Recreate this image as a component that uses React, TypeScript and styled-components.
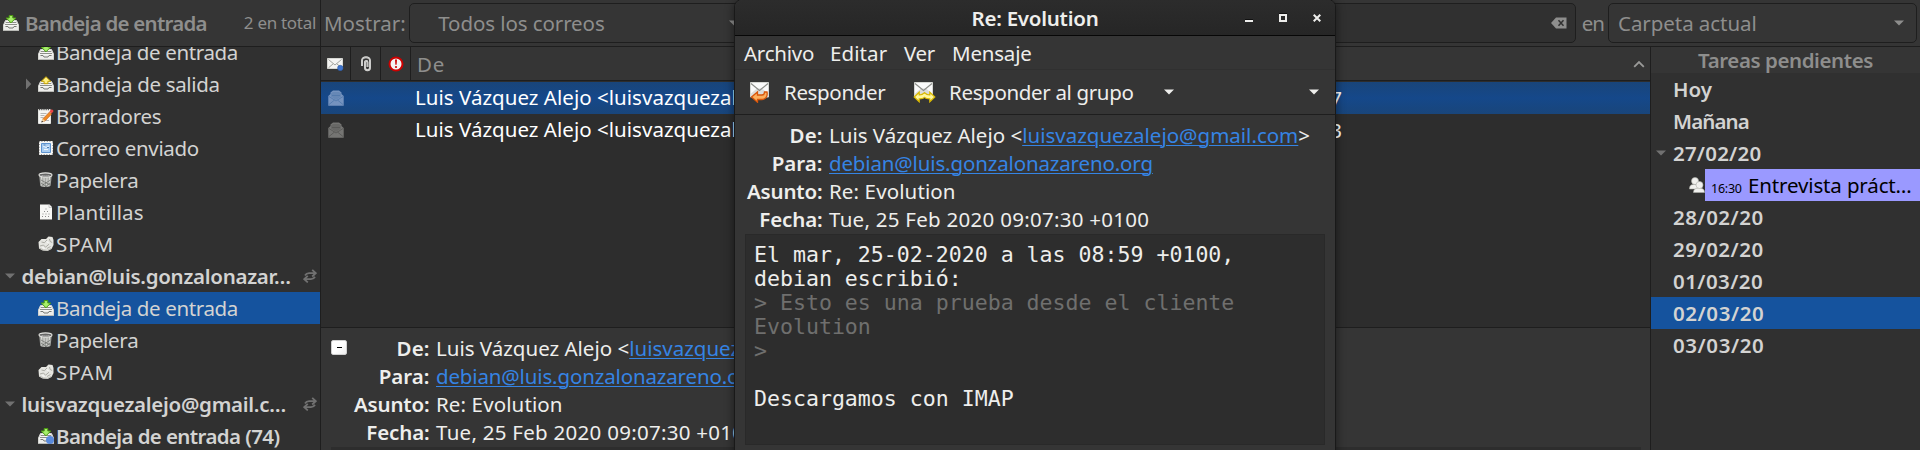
import React from 'react';
import styled, { createGlobalStyle, css } from 'styled-components';

const line = '#1e1e1e';

const Global = createGlobalStyle`
  * { box-sizing: border-box; }
  body {
    margin: 0;
    background: #353535;
    font-family: "Noto Sans", "Open Sans", sans-serif;
    font-size: 20.5px;
    line-height: 32px;
    white-space: nowrap;
  }
  svg { display: block; flex: none; }
`;

const Text = styled.span<{ $ls?: number; $bold?: boolean }>`
  letter-spacing: ${(p) => p.$ls ?? 0}px;
  font-weight: ${(p) => (p.$bold ? 600 : 400)};
`;

const Screen = styled.div`
  position: relative;
  width: 1920px;
  height: 450px;
  overflow: hidden;
  display: grid;
  grid-template-columns: 321px 1fr;
  grid-template-rows: 47px 403px;
  background: #353535;
`;

const FolderHeader = styled.header`
  display: flex;
  align-items: center;
  padding: 0 4px 0 3px;
  border-right: 1px solid ${line};
  border-bottom: 1px solid ${line};
  color: #8e8e8d;
`;
const FolderTitle = styled(Text)`
  margin-left: 6px;
  flex: 1;
`;
const Total = styled(Text)`
  font-size: 17px;
`;

const SearchBar = styled.header`
  display: flex;
  align-items: center;
  padding: 0 3px 0 3px;
  border-bottom: 1px solid ${line};
  color: #8e8e8d;
`;
const Combo = styled.div<{ $width: number; $indent: number; $gap: number }>`
  display: flex;
  align-items: center;
  justify-content: space-between;
  width: ${(p) => p.$width}px;
  height: 40px;
  margin-left: ${(p) => p.$gap}px;
  padding: 0 12px 0 ${(p) => p.$indent}px;
  border: 1px solid ${line};
  border-radius: 5px;
`;
const SearchEntry = styled.div`
  display: flex;
  flex: 1;
  align-items: center;
  justify-content: flex-end;
  height: 40px;
  margin: 0 6px 0 30px;
  padding-right: 8px;
  background: #303030;
  border: 1px solid ${line};
  border-radius: 5px;
`;

const Sidebar = styled.nav`
  overflow: hidden;
  background: #303030;
  border-right: 1px solid ${line};
  color: #d3d3d2;
`;
const FolderList = styled.div`
  margin-top: -11px;
`;
const FolderRow = styled.div<{ $selected?: boolean }>`
  display: flex;
  align-items: center;
  height: 32px;
  padding-left: 26px;
  ${(p) => p.$selected && css`background: #15539e;`}
`;
const Expander = styled.span`
  width: 12px;
`;
const FolderName = styled(Text)`
  margin-left: 2px;
`;
const AccountRow = styled.div`
  display: flex;
  align-items: center;
  height: 32px;
  padding: 0 3px 0 5px;
`;
const AccountName = styled(Text)`
  flex: 1;
  margin-left: 6.5px;
`;

const Main = styled.main`
  display: grid;
  grid-template-columns: 1330px 1fr;
`;
const MailColumn = styled.section`
  display: flex;
  flex-direction: column;
  min-width: 0;
  border-right: 1px solid ${line};
`;
const ListHeader = styled.div`
  display: flex;
  flex: none;
  height: 34px;
  border-bottom: 1px solid ${line};
  color: #8e8e8d;
`;
const IconCell = styled.div`
  display: flex;
  align-items: center;
  justify-content: center;
  width: 30px;
  border-right: 1px solid ${line};
`;
const SenderCell = styled.div`
  display: flex;
  flex: 1;
  align-items: center;
  justify-content: space-between;
  padding: 0 5px 0 6px;
`;
const MessageList = styled.div`
  flex: none;
  height: 247px;
  padding-top: 1px;
  background: #2d2d2d;
  border-bottom: 1px solid ${line};
  color: #ffffff;
`;
const MessageRow = styled.div<{ $selected?: boolean }>`
  display: flex;
  align-items: center;
  height: 32px;
  padding-left: 7px;
  line-height: 30px;
  ${(p) => p.$selected && css`
    background: linear-gradient(#19457a, #15488a 50%, #19457a);
  `}
`;
const Sender = styled(Text)`
  width: 540px;
  margin-left: 71px;
  height: 32px;
  overflow: hidden;
`;
const When = styled(Text)`
  width: 387px;
  text-align: right;
`;

const Preview = styled.div<{ $indent: number }>`
  display: flex;
  flex: 1;
  align-items: flex-start;
  padding: 6px 0 0 ${(p) => p.$indent}px;
  color: #eeeeec;
`;
const PreviewBody = styled.div`
  flex: none;
  height: 3px;
  margin: 0 9px 0 10px;
  background: #2d2d2d;
`;
const CollapseButton = styled.div`
  display: flex;
  align-items: center;
  justify-content: center;
  width: 16px;
  height: 15px;
  margin-top: 6px;
  border: 1px solid #d0d0d0;
  border-radius: 2px;
  background: linear-gradient(135deg, #fff 50%, #ededed);
`;
const Dash = styled.i`
  width: 5px;
  height: 1px;
  background: #000;
`;
const Fields = styled.div<{ $label: number }>`
  display: grid;
  grid-template-columns: ${(p) => p.$label}px auto;
  column-gap: 6.5px;
  line-height: 28px;
`;
const FieldName = styled(Text)`
  text-align: right;
`;
const Link = styled.a<{ $ls: number }>`
  letter-spacing: ${(p) => p.$ls}px;
  color: #3584e4;
  text-decoration: underline;
  text-decoration-thickness: 1px;
  text-underline-offset: 2px;
`;

const Tasks = styled.aside`
  background: #303030;
  color: #d3d3d2;
`;
const TasksTitle = styled.div`
  height: 26px;
  line-height: 26px;
  text-align: center;
  background: #353535;
  color: #8e8e8d;
`;
const DayRow = styled.div<{ $selected?: boolean }>`
  display: flex;
  align-items: center;
  height: 32px;
  padding-left: 5px;
  ${(p) => p.$selected && css`background: #15539e;`}
`;
const DayMark = styled.span`
  width: 17px;
`;
const EventRow = styled.div`
  display: flex;
  align-items: center;
  height: 32px;
  padding-left: 38px;
`;
const EventLabel = styled.div`
  display: flex;
  flex: 1;
  align-items: baseline;
  height: 32px;
  padding-left: 6px;
  background: #9a99ff;
  color: #000;
`;
const EventTime = styled(Text)`
  width: 37px;
  font-size: 12.5px;
`;

const Window = styled.section`
  position: absolute;
  top: -1px;
  left: 734px;
  width: 602px;
  height: 470px;
  display: flex;
  flex-direction: column;
  background: #353535;
  border: 1px solid #191919;
  border-radius: 8px 8px 0 0;
  box-shadow: 0 2px 9px 1px rgba(0, 0, 0, 0.42);
  color: #eeeeec;
  overflow: hidden;
`;
const TitleBar = styled.div`
  display: grid;
  grid-template-columns: 1fr auto 1fr;
  align-items: center;
  flex: none;
  height: 36px;
  padding: 0 14px;
  background: linear-gradient(#2c2c2c, #262626);
  border-bottom: 1px solid #070707;
`;
const WindowButtons = styled.div`
  display: flex;
  justify-content: flex-end;
  gap: 26px;
  grid-column: 3;
`;
const WindowTitle = styled(Text)`
  grid-column: 2;
`;
const MenuBar = styled.div`
  display: flex;
  flex: none;
  align-items: center;
  height: 34px;
  padding-left: 9px;
  border-bottom: 1px solid #303030;
`;
const MenuItem = styled(Text)<{ $width: number }>`
  width: ${(p) => p.$width}px;
`;
const ToolBar = styled.div`
  display: flex;
  flex: none;
  align-items: center;
  height: 45px;
  padding: 0 16px 0 14px;
  border-bottom: 1px solid ${line};
`;
const ToolButton = styled.div<{ $width: number }>`
  display: flex;
  align-items: center;
  gap: 13px;
  width: ${(p) => p.$width}px;
`;
const Spring = styled.span`
  flex: 1;
`;
const WindowFields = styled.div`
  flex: none;
  height: 119px;
  padding: 6px 0 0 9px;
`;
const MessageBody = styled.pre`
  flex: none;
  width: 580px;
  height: 211px;
  margin: 0 0 0 10px;
  padding: 8px 8px 0;
  background: #2d2d2d;
  border: 1px solid #292929;
  font: 21.57px/24px "DejaVu Sans Mono", monospace;
`;
const Quote = styled.span`
  color: #6f6f6e;
`;

const Down = ({ color = '#8e8e8d' }: { color?: string }) => (
  <svg width="10" height="6" viewBox="0 0 10 6"><path d="M0 .5h10L5 5.5z" fill={color} /></svg>
);
const Right = () => (
  <svg width="6" height="12" viewBox="0 0 6 12"><path d="M0 .5v11L5.3 6z" fill="#717171" /></svg>
);
const Tray = () => (
  <>
    <path d="M2.5 5.5h11l2 4.5v5.5H.5V10z" fill="#f4f4f2" stroke="#d4d5d1" />
    <path d="M2.7 7.5h10.6M2 9.5h12" stroke="#8d8f8a" />
    <path d="M1 11h14v4H1z" fill="#ececea" />
    <path d="M2.500 11.500h2.500l1 1.500h4l1-1.500h2.500" fill="none" stroke="#777974" />
    <path d="M.5 15.500h15" stroke="#b9bab6" />
  </>
);
const Inbox = ({ unread }: { unread?: boolean }) => (
  <svg width="16" height="16" viewBox="0 0 16 16">
    <Tray />
    <path d="M6.2.5h3.6V3h3L8 7.8 3.2 3h3z" fill="#a6ee6a" stroke="#4a9a10" />
    {unread && <circle cx="12" cy="12" r="4" fill="#5a8bdc" />}
  </svg>
);
const Outbox = () => (
  <svg width="16" height="16" viewBox="0 0 16 16">
    <Tray />
    <path d="M8 .7l4.7 4.6H9.9v2.4H6.1V5.3H3.3z" fill="#fff080" stroke="#c4a000" />
  </svg>
);
const Drafts = () => (
  <svg width="16" height="16" viewBox="0 0 16 16">
    <path d="M.5 1.5h12v14H.5z" fill="#f6f6f4" stroke="#e4e5e1" />
    <path d="M1 1.5h11.5" stroke="#555" strokeDasharray="1.2 1" strokeWidth="1.6" />
    <path d="M2.5 5.5h6M2.5 7.5h4M2.5 9.5h3M8 12.500h3" stroke="#b5b5b5" />
    <path d="M4 13.700l1-3 6.500-6.700 2.200 2-6.700 7z" fill="#f08a24" stroke="#b4541a" strokeWidth=".6" />
    <path d="M11.500 3.600l1.600-2c1.200-.6 2.700.6 2.200 1.900l-1.700 2.100z" fill="#e64545" />
    <path d="M3.500 14.2l1.200-3.400 2.400 2.300z" fill="#f3d9a8" />
    <path d="M3.3 14.400l.6-1.700 1.300 1.100z" fill="#222" />
  </svg>
);
const Sent = () => (
  <svg width="16" height="16" viewBox="0 0 16 16">
    <path d="M1 1h14v14H1z" fill="#f6f6f4" />
    <path d="M.7 .7h14.6v14.6H.7z" fill="none" stroke="#303030" strokeWidth="1.4" strokeDasharray="1 1.700" />
    <path d="M3.5 3.5h9v9h-9z" fill="#a9cdf2" stroke="#5e93cf" />
    <path d="M5 6l3 1.5L11 6M6 9.5h4" stroke="#eef5fc" fill="none" />
    <path d="M5.5 5h2M9 7.5h2" stroke="#5580b0" />
  </svg>
);
const Trash = () => (
  <svg width="16" height="16" viewBox="0 0 16 16">
    <path d="M1.200 3l1 10.500c.6 2 9.800 2 10.400 0L13.800 3z" fill="#a5a7a3" />
    <path d="M3.500 5l.6 9M6 5.500l.3 9M9 5.500l-.3 9M11.500 5l-.6 9" stroke="#dededb" />
    <path d="M3 8l9 5M3 11l6 4M12.500 8L4 13.500M12 11l-5 4" stroke="#666864" strokeWidth=".7" />
    <ellipse cx="7.500" cy="3" rx="6.500" ry="2.100" fill="#666" stroke="#e4e4e1" strokeWidth="1.100" />
    <path d="M3.500 3.400c2 .8 6 .8 8 0" stroke="#aaa" fill="none" />
  </svg>
);
const Template = () => (
  <svg width="16" height="16" viewBox="0 0 16 16">
    <path d="M2 .5h9.500l2.500 2.600v12.400H2z" fill="#f7f7f5" />
    <path d="M11 .5v3h3" fill="none" stroke="#bbb" strokeWidth=".8" />
    <path d="M7.500 5h1M6 7.500h1M9 7.500h1M4.500 10h1M7.500 10h1M10.500 10h1M4 12.500h1M7 12.500h1M10 12.500h1" stroke="#8b8b8b" />
  </svg>
);
const Junk = () => (
  <svg width="16" height="16" viewBox="0 0 16 16">
    <path d="M.5 6l3-3L8 3l2.500-2.500 4 .5 1 3v5l-2 4-4 2-5-.5-3.500-2z" fill="#e6e6e1" />
    <path d="M3.500 6l3 .7 2.500-2.700M2 10l3.500-1 2 2.200 3.500-3M9 12.500l3.500-2M11.500 3l.7 2.500 2 1" fill="none" stroke="#9d9d95" strokeWidth=".8" />
    <path d="M1.500 12l4 2 4 .3 3.500-1.800" fill="none" stroke="#b4b4ac" strokeWidth=".8" />
    <path d="M4.500 11.500l2 1M8.500 5.700l2 .8" stroke="#fff" />
  </svg>
);
const Sync = () => (
  <svg width="14" height="14" viewBox="0 0 14 14" fill="none" stroke="#717171" strokeWidth="1.800">
    <path d="M2 6.500C3 4.800 4 4.200 6 4.200h6M9.200.8l3.600 3.400-3.600 3.300" />
    <path d="M12 7.800c-1 1.700-2 2.300-4 2.300H2M4.800 6.800l-3.600 3.300 3.600 3.300" />
  </svg>
);
const Unread = () => (
  <svg width="17" height="14" viewBox="0 0 17 14">
    <path d="M.5 1.500h15v10H.5z" fill="#f5f5f3" stroke="#d6d7d3" />
    <path d="M1.500 2.500L8 8l6.500-5.500M1.500 10.800l4.700-4M14.500 10.800l-4.700-4" fill="none" stroke="#989a95" strokeWidth=".9" />
    <circle cx="13.300" cy="11" r="2.700" fill="#3f74cc" stroke="#2c5aa5" strokeWidth=".6" />
  </svg>
);
const Clip = () => (
  <svg width="12" height="16" viewBox="0 0 12 16" fill="none">
    <path d="M2 10V4.500C2 .2 10 .2 10 4.500v7c0 3.700-5 3.700-5 0V6.200C5 4.500 7.500 4.500 7.500 6.200V11" stroke="#e6e6e4" strokeWidth="1.900" />
    <path d="M2 10V4.500C2 .2 10 .2 10 4.500v7c0 3.700-5 3.700-5 0V6.200C5 4.500 7.500 4.500 7.500 6.200V11" stroke="#9b9b99" strokeWidth=".5" />
  </svg>
);
const Important = () => (
  <svg width="16" height="16" viewBox="0 0 16 16">
    <circle cx="8" cy="8" r="6.500" fill="#f3f3f3" stroke="#cc0000" strokeWidth="2" />
    <path d="M7 3.500h2l-.4 5.300H7.400z" fill="#cc0000" />
    <circle cx="8" cy="11" r="1.100" fill="#cc0000" />
  </svg>
);
const ReadMail = ({ tint }: { tint?: boolean }) => {
  const [body, edge] = tint ? ['#7593bf', '#4f77ab'] : ['#757573', '#555553'];
  return (
    <svg width="16" height="16" viewBox="0 0 16 16">
      <path d="M.3 6L2.500 4V2.500L5 .5h6l2.500 2V4l2.200 2v9.700H.3z" fill={body} />
      <path d="M3 6.500V3.500L5 2h6l2 1.500v3L8 10z" fill={edge} opacity=".4" />
      <path d="M1 6.500L8 11l7-4.500M1 14.500L6.500 10M15 14.500L9.500 10M4 5.500h8" fill="none" stroke={edge} strokeWidth=".8" />
    </svg>
  );
};
const Clear = () => (
  <svg width="16" height="12" viewBox="0 0 16 12">
    <path d="M0 6l5-5.500h10.500v11H5z" fill="#8e8e8d" />
    <path d="M7.500 3.300l5 5.400M12.500 3.300l-5 5.400" stroke="#303030" strokeWidth="1.500" />
  </svg>
);
const SortUp = () => (
  <svg width="12" height="8" viewBox="0 0 12 8"><path d="M1.200 6.800L6 2l4.800 4.800" fill="none" stroke="#9a9a99" strokeWidth="1.800" /></svg>
);
const People = () => (
  <svg width="16" height="16" viewBox="0 0 16 16" fill="#f1f1ee" stroke="#b0b1ab" strokeWidth=".6">
    <path d="M.5 12c0-4 2-4.500 5-4.500s4 2 4 4.500z" />
    <circle cx="6" cy="4" r="3.500" />
    <path d="M4.500 15.600c0-3.500 2.500-4.500 5.500-4.500s5.500 1 5.500 4.500z" />
    <circle cx="10.500" cy="8" r="3.500" />
  </svg>
);
const Letter = () => (
  <>
    <path d="M1.500 1.500h18v14.500h-18z" fill="#fafafa" stroke="#d5d6d2" />
    <path d="M2 15.500v-3l6-5h5l6 5v3z" fill="#dcdcda" />
    <path d="M2 2.500l8.500 7L19 2.500" fill="none" stroke="#8c8e89" strokeWidth="1.200" />
  </>
);
const Reply = () => (
  <svg width="22" height="22" viewBox="0 0 22 22">
    <Letter />
    <path d="M2.500 16l6-5v3h4.500c2 0 2.500-1 2.500-3h2.500c1 5-2 7.500-5 7.500H8.500v2.700z" fill="#fcaf5e" stroke="#d9560a" strokeWidth="1.300" />
  </svg>
);
const ReplyAll = () => (
  <svg width="23" height="22" viewBox="0 0 23 22">
    <Letter />
    <path d="M1.200 16l5-4.800v2.800c2 0 3.500-.3 5.300-2.300 1.800 2 3.300 2.300 5.300 2.300v-2.800l5 4.800-5 4.800v-2.900c-2 0-4-.2-5.300-1.500-1.300 1.300-3.300 1.500-5.300 1.500v2.900z" fill="#fff7a0" stroke="#d9b800" strokeWidth="1.200" />
  </svg>
);
const Minimize = () => (
  <svg width="8" height="10" viewBox="0 0 8 10"><path d="M0 6h8v1H0z" fill="#111" /><path d="M0 7h8v2H0z" fill="#eeeeec" /></svg>
);
const Maximize = () => (
  <svg width="8" height="10" viewBox="0 0 8 10"><path d="M0 0h8v1H0z" fill="#111" /><path d="M1 2h6v6H1z" fill="none" stroke="#eeeeec" strokeWidth="2" /></svg>
);
const Close = () => (
  <svg width="8" height="10" viewBox="0 0 8 10"><path d="M.7 1.700l6.600 6.600M7.300 1.700L.7 8.300" stroke="#eeeeec" strokeWidth="2" /></svg>
);

const folder = (icon: React.ReactNode, name: string, ls: number, expandable = false) => ({ icon, name, ls, expandable });
const localFolders = [
  folder(<Inbox />, 'Bandeja de entrada', -0.37),
  folder(<Outbox />, 'Bandeja de salida', -0.33, true),
  folder(<Drafts />, 'Borradores', -0.3),
  folder(<Sent />, 'Correo enviado', -0.34),
  folder(<Trash />, 'Papelera', -0.26),
  folder(<Template />, 'Plantillas', 0.12),
  folder(<Junk />, 'SPAM', 0.9),
];
const serverFolders = [
  folder(<Inbox />, 'Bandeja de entrada', -0.37),
  folder(<Trash />, 'Papelera', -0.26),
  folder(<Junk />, 'SPAM', 0.9),
];

const Folders = ({ items, selected }: { items: typeof localFolders; selected?: number }) => (
  <>
    {items.map((f, i) => (
      <FolderRow key={f.name} $selected={i === selected}>
        <Expander>{f.expandable && <Right />}</Expander>
        {f.icon}
        <FolderName $ls={f.ls}>{f.name}</FolderName>
      </FolderRow>
    ))}
  </>
);
const Account = ({ name }: { name: string }) => (
  <AccountRow>
    <Down color="#717171" />
    <AccountName $bold $ls={-0.27}>{name}</AccountName>
    <Sync />
  </AccountRow>
);
const MailFields = ({ label }: { label: number }) => (
  <Fields $label={label}>
    <FieldName $bold $ls={0.1}>De:</FieldName>
    <Text $ls={0}>Luis Vázquez Alejo &lt;<Link $ls={0}>luisvazquezalejo@gmail.com</Link>&gt;</Text>
    <FieldName $bold>Para:</FieldName>
    <Text><Link $ls={-0.15}>debian@luis.gonzalonazareno.org</Link></Text>
    <FieldName $bold $ls={-0.15}>Asunto:</FieldName>
    <Text $ls={0.12}>Re: Evolution</Text>
    <FieldName $bold $ls={-0.15}>Fecha:</FieldName>
    <Text $ls={0.27}>Tue, 25 Feb 2020 09:07:30 +0100</Text>
  </Fields>
);

const days = [
  { day: '28/02/20', ls: 0.5 },
  { day: '29/02/20', ls: 0.5 },
  { day: '01/03/20', ls: 0.42 },
  { day: '02/03/20', ls: 0.58 },
  { day: '03/03/20', ls: 0.58 },
];

export default function App() {
  return (
    <>
      <Global />
      <Screen>
        <FolderHeader>
          <Inbox />
          <FolderTitle $bold $ls={-0.76}>Bandeja de entrada</FolderTitle>
          <Total $ls={-0.3}>2 en total</Total>
        </FolderHeader>
        <SearchBar>
          <Text>Mostrar:</Text>
          <Combo $width={343} $indent={28} $gap={3.5}>
            <Text $ls={-0.09}>Todos los correos</Text>
            <Down />
          </Combo>
          <SearchEntry><Clear /></SearchEntry>
          <Text $ls={-1}>en</Text>
          <Combo $width={309} $indent={9} $gap={4}>
            <Text $ls={-0.06}>Carpeta actual</Text>
            <Down />
          </Combo>
        </SearchBar>

        <Sidebar>
          <FolderList>
            <Folders items={localFolders} />
            <Account name="debian@luis.gonzalonazar…" />
            <Folders items={serverFolders} selected={0} />
            <Account name="luisvazquezalejo@gmail.c…" />
            <FolderRow>
              <Expander />
              <Inbox unread />
              <FolderName $bold $ls={-0.61}>Bandeja de entrada (74)</FolderName>
            </FolderRow>
          </FolderList>
        </Sidebar>

        <Main>
          <MailColumn>
            <ListHeader>
              <IconCell><Unread /></IconCell>
              <IconCell><Clip /></IconCell>
              <IconCell><Important /></IconCell>
              <SenderCell><Text $ls={0.9}>De</Text><SortUp /></SenderCell>
            </ListHeader>
            <MessageList>
              <MessageRow $selected>
                <ReadMail tint />
                <Sender $ls={0.03}>Luis Vázquez Alejo &lt;luisvazquezalejo@gmail.com&gt;</Sender>
                <When>09:07</When>
              </MessageRow>
              <MessageRow>
                <ReadMail />
                <Sender $ls={0.03}>Luis Vázquez Alejo &lt;luisvazquezalejo@gmail.com&gt;</Sender>
                <When>09:03</When>
              </MessageRow>
            </MessageList>
            <Preview $indent={10}>
              <CollapseButton><Dash /></CollapseButton>
              <MailFields label={82.5} />
            </Preview>
            <PreviewBody />
          </MailColumn>
          <Tasks>
            <TasksTitle><Text $bold $ls={-0.42}>Tareas pendientes</Text></TasksTitle>
            <DayRow><DayMark /><Text $bold>Hoy</Text></DayRow>
            <DayRow><DayMark /><Text $bold $ls={-0.9}>Mañana</Text></DayRow>
            <DayRow><DayMark><Down color="#717171" /></DayMark><Text $bold $ls={0.2}>27/02/20</Text></DayRow>
            <EventRow>
              <People />
              <EventLabel>
                <EventTime $ls={-0.25}>16:30</EventTime>
                <Text $ls={-0.14}>Entrevista práct…</Text>
              </EventLabel>
            </EventRow>
            {days.map((d) => (
              <DayRow key={d.day} $selected={d.day === '02/03/20'}>
                <DayMark />
                <Text $bold $ls={d.ls}>{d.day}</Text>
              </DayRow>
            ))}
          </Tasks>
        </Main>

        <Window>
          <TitleBar>
            <WindowTitle $bold $ls={-0.25}>Re: Evolution</WindowTitle>
            <WindowButtons><Minimize /><Maximize /><Close /></WindowButtons>
          </TitleBar>
          <MenuBar>
            <MenuItem $width={86} $ls={-0.23}>Archivo</MenuItem>
            <MenuItem $width={74} $ls={0.1}>Editar</MenuItem>
            <MenuItem $width={48} $ls={-0.36}>Ver</MenuItem>
            <MenuItem $width={90} $ls={-0.2}>Mensaje</MenuItem>
          </MenuBar>
          <ToolBar>
            <ToolButton $width={164}><Reply /><Text $ls={-0.35}>Responder</Text></ToolButton>
            <ToolButton $width={251}><ReplyAll /><Text $ls={-0.34}>Responder al grupo</Text></ToolButton>
            <Down color="#eeeeec" />
            <Spring />
            <Down color="#eeeeec" />
          </ToolBar>
          <WindowFields><MailFields label={78.5} /></WindowFields>
          <MessageBody>
            {'El mar, 25-02-2020 a las 08:59 +0100,\ndebian escribió:\n'}
            <Quote>{'> Esto es una prueba desde el cliente\nEvolution\n>\n'}</Quote>
            {'\nDescargamos con IMAP'}
          </MessageBody>
        </Window>
      </Screen>
    </>
  );
}
